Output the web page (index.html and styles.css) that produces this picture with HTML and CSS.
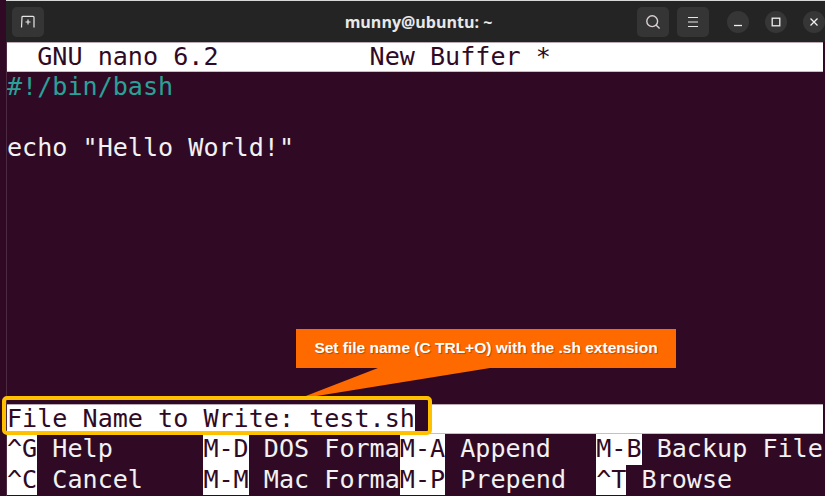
FILE: index.html
```html
<!DOCTYPE html>
<html lang="en">
<head>
<meta charset="utf-8">
<title>munny@ubuntu: ~</title>
<link rel="stylesheet" href="styles.css">
</head>
<body>
<div class="window">
  <header class="titlebar">
    <button class="tool tool-new" aria-label="New tab">
      <svg width="16" height="16" viewBox="0 0 16 16" fill="none" stroke="#e6e6e6" stroke-width="1.2"><path d="M1.5 13.5 2 3.2q0-.9 1-.9h10q1 0 1 .9v10.3"/><path d="M8 5.5v5M5.5 8h5"/></svg>
    </button>
    <div class="title">munny@ubuntu: ~</div>
    <button class="tool tool-search" aria-label="Search">
      <svg width="16" height="16" viewBox="0 0 16 16" fill="none" stroke="#d8d0d4" stroke-width="1.4"><circle cx="7.2" cy="7.2" r="5.4"/><path d="M11 11l3.6 3.6"/></svg>
    </button>
    <button class="tool tool-menu" aria-label="Menu">
      <svg width="14" height="14" viewBox="0 0 14 14" fill="none" stroke="#e6e6e6" stroke-width="1.2"><path d="M2 2.5h10M2 7h10M2 11.5h10"/></svg>
    </button>
    <button class="win win-min" aria-label="Minimize">
      <svg width="10" height="10" viewBox="0 0 10 10" fill="none" stroke="#f0f0f0" stroke-width="1.3"><path d="M1 8.5h8"/></svg>
    </button>
    <button class="win win-max" aria-label="Maximize">
      <svg width="10" height="10" viewBox="0 0 10 10" fill="none" stroke="#f0f0f0" stroke-width="1.3"><rect x="1.2" y="1.2" width="7.6" height="7.6"/></svg>
    </button>
    <button class="win win-close" aria-label="Close">
      <svg width="10" height="10" viewBox="0 0 10 10" fill="none" stroke="#f0f0f0" stroke-width="1.3"><path d="M1.5 1.5l7 7M8.5 1.5l-7 7"/></svg>
    </button>
  </header>
  <main class="term">
    <div class="row row-bar">  GNU nano 6.2          New Buffer *</div>
    <div class="editor">
      <div class="row row-shebang">#!/bin/bash</div>
      <div class="row"> </div>
      <div class="row">echo "Hello World!"</div>
    </div>
    <div class="row row-bar">File Name to Write: test.sh<span class="cursor"> </span></div>
    <div class="row"><span class="key">^G</span> Help      <span class="key">M-D</span> DOS Forma<span class="key">M-A</span> Append   <span class="key">M-B</span> Backup File</div>
    <div class="row"><span class="key">^C</span> Cancel    <span class="key">M-M</span> Mac Forma<span class="key">M-P</span> Prepend  <span class="key">^T</span> Browse</div>
  </main>
</div>
<svg class="tail" width="192" height="31" viewBox="0 0 192 31"><polygon points="0,31 80,0 192,0" fill="#ff6a00"/></svg>
<div class="frame"></div>
<div class="callout">Set file name (C TRL+O) with the .sh extension</div>
</body>
</html>
```
FILE: styles.css
```css
html, body {
  margin: 0;
  padding: 0;
}

body {
  width: 825px;
  height: 496px;
  overflow: hidden;
  background: #300a24;
  position: relative;
}

.window {
  margin-left: 6px;
  border-left: 1px solid #4c2a42;
  height: 496px;
  box-sizing: border-box;
}

.titlebar {
  height: 42px;
  margin-left: -1px;
  border-top: 1px solid #d8d8d8;
  box-sizing: border-box;
  background: #242424;
  display: flex;
  align-items: center;
  padding: 0 0 0 6px;
}

.tool {
  width: 32px;
  height: 30px;
  padding: 0;
  border: 0;
  border-radius: 5px;
  background: #353535;
  display: flex;
  align-items: center;
  justify-content: center;
}

.title {
  flex: 1;
  font: bold 16px "Open Sans", sans-serif;
  color: #e8e8e8;
  text-align: center;
  padding-left: 156px;
  white-space: nowrap;
}

.tool-search {
  margin-right: 8px;
}

.tool-menu {
  margin-right: 18px;
}

.win {
  width: 22px;
  height: 22px;
  padding: 0;
  border: 0;
  border-radius: 50%;
  background: #363636;
  display: flex;
  align-items: center;
  justify-content: center;
  margin-right: 16px;
}

.win-close {
  margin-right: 0;
}

.term {
  font: 25.1px/30.4px "DejaVu Sans Mono", monospace;
  color: #f2f2f2;
}

.row {
  height: 30.2px;
  overflow: hidden;
  white-space: pre;
}

.row-bar {
  background: #fff;
  color: #300a24;
  width: 816px;
  box-shadow: inset 0 1px 0 #b9aab4, inset 0 -1px 0 #c9bec6;
}

.row-shebang {
  color: #2aa198;
}

.editor {
  height: 332px;
}

.key {
  display: inline-block;
  height: 31px;
  vertical-align: top;
  background: #fff;
  color: #300a24;
}

.cursor {
  display: inline-block;
  height: 31px;
  vertical-align: top;
  background: #300a24;
}

.frame {
  position: absolute;
  left: 2px;
  top: 396px;
  width: 422px;
  height: 31px;
  border: 4px solid #ffc000;
  border-radius: 5px;
  background: linear-gradient(to right, transparent 413px, #300a24 413px) ;
}

.tail {
  position: absolute;
  left: 298px;
  top: 368px;
}

.callout {
  position: absolute;
  left: 296px;
  top: 329px;
  width: 380px;
  height: 39px;
  background: #ff6a00;
  color: #fff;
  font: bold 15.5px/38px "Liberation Sans", sans-serif;
  text-align: center;
  text-shadow: 1px 1px 1px rgba(90, 40, 0, .45);
  white-space: nowrap;
}
```
